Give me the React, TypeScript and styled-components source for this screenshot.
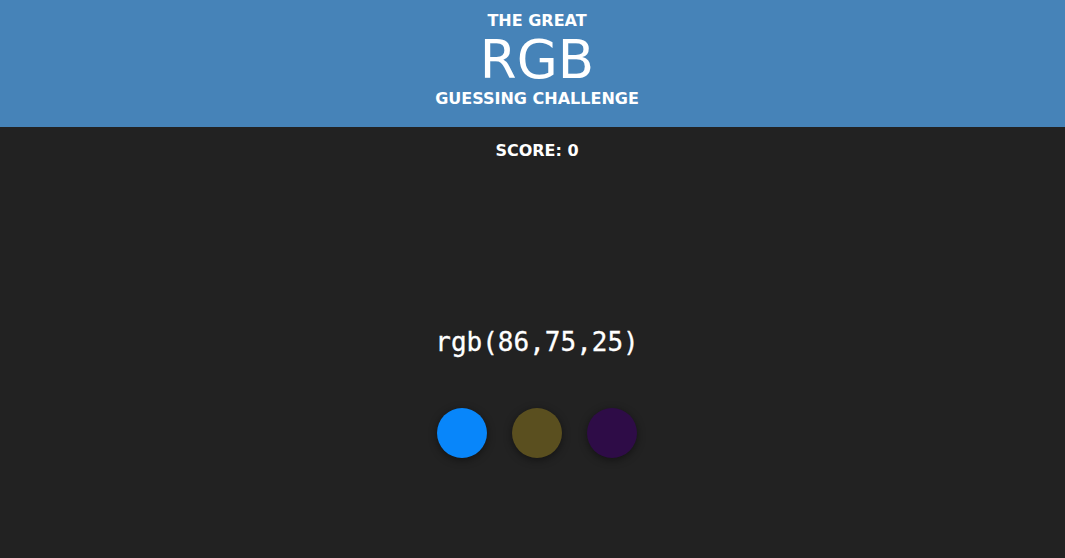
import React from "react";
import styled, { createGlobalStyle } from "styled-components";

const GlobalStyle = createGlobalStyle`
  html, body {
    margin: 0;
    padding: 0;
    background: #222222;
    font-family: "DejaVu Sans", "Open Sans", sans-serif;
    color: #ffffff;
  }
`;

const Page = styled.div`
  min-height: 100vh;
  display: flex;
  flex-direction: column;
  background: #222222;
  padding-left: 9px;
`;

const Header = styled.header`
  height: 127px;
  box-sizing: border-box;
  margin-left: -9px;
  padding-left: 9px;
  background: #4683b8;
  display: flex;
  flex-direction: column;
  align-items: center;
  padding-top: 12px;
  text-transform: uppercase;
`;

const Subtitle = styled.div`
  font-size: 16px;
  font-weight: 600;
  line-height: 18px;
`;

const Title = styled.h1`
  margin: 0;
  font-size: 53px;
  font-weight: 500;
  line-height: 60px;
`;

const Score = styled.div`
  text-align: center;
  font-size: 16px;
  font-weight: 700;
  margin-top: 15px;
  line-height: 18px;
`;

const Game = styled.main`
  display: flex;
  flex-direction: column;
  align-items: center;
  padding-top: 166px;
`;

const Target = styled.div`
  font-family: "DejaVu Sans Mono", "Liberation Mono", monospace;
  font-size: 26px;
  line-height: 32px;
  -webkit-text-stroke: 0.3px #ffffff;
`;

const Choices = styled.div`
  display: flex;
  gap: 25px;
  margin-top: 50px;
`;

const Choice = styled.button<{ $color: string }>`
  width: 50px;
  height: 50px;
  border: none;
  border-radius: 50%;
  padding: 0;
  background: ${(p) => p.$color};
  box-shadow: 0 2px 8px rgba(0, 0, 0, 0.45);
  cursor: pointer;
`;

const options = ["rgb(8,134,250)", "rgb(90,79,31)", "rgb(46,12,71)"];

export default function App() {
  return (
    <Page>
      <GlobalStyle />
      <Header>
        <Subtitle>The Great</Subtitle>
        <Title>RGB</Title>
        <Subtitle>Guessing Challenge</Subtitle>
      </Header>
      <Score>SCORE: 0</Score>
      <Game>
        <Target>rgb(86,75,25)</Target>
        <Choices>
          {options.map((c) => (
            <Choice key={c} $color={c} />
          ))}
        </Choices>
      </Game>
    </Page>
  );
}
